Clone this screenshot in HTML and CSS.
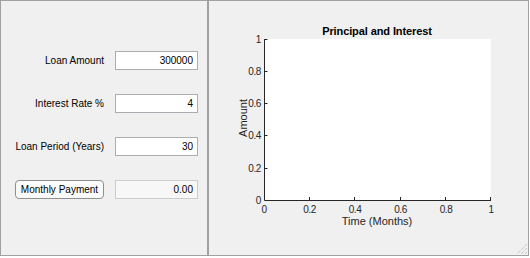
FILE: index.html
```html
<!DOCTYPE html>
<html lang="en">
<head>
    <meta charset="UTF-8">
    <title>Loan Calculator</title>
    <link rel="stylesheet" href="styles.css">
</head>
<body>
    <div class="app">
        <div class="panel controls">
            <div class="row">
                <label class="label" for="amount">Loan Amount</label>
                <input class="field" type="text" id="amount" value="300000">
            </div>
            <div class="row">
                <label class="label" for="rate">Interest Rate %</label>
                <input class="field" type="text" id="rate" value="4">
            </div>
            <div class="row">
                <label class="label" for="period">Loan Period (Years)</label>
                <input class="field" type="text" id="period" value="30">
            </div>
            <div class="row">
                <button class="calc" type="button">Monthly Payment</button>
                <input class="field output" type="text" value="0.00" readonly>
            </div>
        </div>

        <div class="panel chart">
            <svg class="plot" width="319" height="254" viewBox="209 1 319 254">
                <text class="title" x="377" y="35">Principal and Interest</text>
                <rect x="264" y="39" width="227" height="161" fill="#fff"/>

                <!-- axes -->
                <path class="axis" d="M264.5 39V200.5H491"/>
                <path class="axis" d="M264.5 39.5h3M264.5 71.5h3M264.5 103.5h3M264.5 135.5h3M264.5 168.5h3"/>
                <path class="axis" d="M309.5 200v-3M354.5 200v-3M400.5 200v-3M445.5 200v-3M490.5 200v-3"/>

                <g class="ticks ticks-y">
                    <text x="261" y="43">1</text>
                    <text x="261" y="75">0.8</text>
                    <text x="261" y="107">0.6</text>
                    <text x="261" y="139">0.4</text>
                    <text x="261" y="172">0.2</text>
                    <text x="261" y="204">0</text>
                </g>
                <g class="ticks ticks-x">
                    <text x="264" y="213">0</text>
                    <text x="309.5" y="213">0.2</text>
                    <text x="355" y="213">0.4</text>
                    <text x="400.5" y="213">0.6</text>
                    <text x="446" y="213">0.8</text>
                    <text x="491" y="213">1</text>
                </g>

                <text class="axis-label" x="377" y="225">Time (Months)</text>
                <text class="axis-label" transform="translate(246.5 118) rotate(-90)">Amount</text>
            </svg>

            <svg class="grip" width="13" height="13" viewBox="0 0 13 13">
                <path d="M12 2L2 12M12 6L6 12M12 10L10 12" stroke="#b4b4b4" stroke-width="1" stroke-dasharray="1 1"/>
            </svg>
        </div>
    </div>
</body>
</html>
```

FILE: styles.css
```css
body {
    margin: 0;
    background-color: #fff;
    font-family: "Liberation Sans", Arial, sans-serif;
    color: #000;
}

.app {
    display: flex;
    width: 529px;
    height: 256px;
    background-color: #f0f0f0;
}

.panel {
    box-sizing: border-box;
    height: 256px;
    border: 1px solid #a0a0a0;
}

.controls {
    width: 208px;
    padding: 50px 0 0 14px;
    display: flex;
    flex-direction: column;
    gap: 24px;
}

.row {
    display: grid;
    grid-template-columns: 89px 83px;
    column-gap: 11px;
    align-items: center;
    height: 19px;
}

.label {
    text-align: right;
    font-size: 10px;
}

.field {
    box-sizing: border-box;
    width: 83px;
    height: 19px;
    margin: 0;
    padding: 0 4px;
    border: 1px solid #abadb3;
    background-color: #fff;
    font-family: "Liberation Sans", Arial, sans-serif;
    font-size: 10px;
    color: #000;
    text-align: right;
    outline: none;
}

.output {
    background-color: #f7f7f7;
    border-color: #cccccc;
}

.calc {
    box-sizing: border-box;
    height: 19px;
    margin: 0;
    padding: 0;
    border: 1px solid #8f8f8f;
    border-radius: 4px;
    background-color: #fbfbfb;
    font-family: "Liberation Sans", Arial, sans-serif;
    font-size: 10px;
    color: #000;
}

.chart {
    flex: 1;
    position: relative;
}

.plot {
    display: block;
    font-family: "Liberation Sans", Arial, sans-serif;
}

.title {
    font-size: 11px;
    font-weight: bold;
    letter-spacing: -0.1px;
    text-anchor: middle;
    fill: #000;
}

.axis {
    fill: none;
    stroke: #262626;
    stroke-width: 1;
}

.ticks {
    font-size: 10px;
    letter-spacing: -0.4px;
    fill: #262626;
}

.ticks-y {
    text-anchor: end;
}

.ticks-x {
    text-anchor: middle;
}

.axis-label {
    font-size: 11px;
    text-anchor: middle;
    fill: #262626;
}

.grip {
    position: absolute;
    right: 0;
    bottom: 0;
}
```
